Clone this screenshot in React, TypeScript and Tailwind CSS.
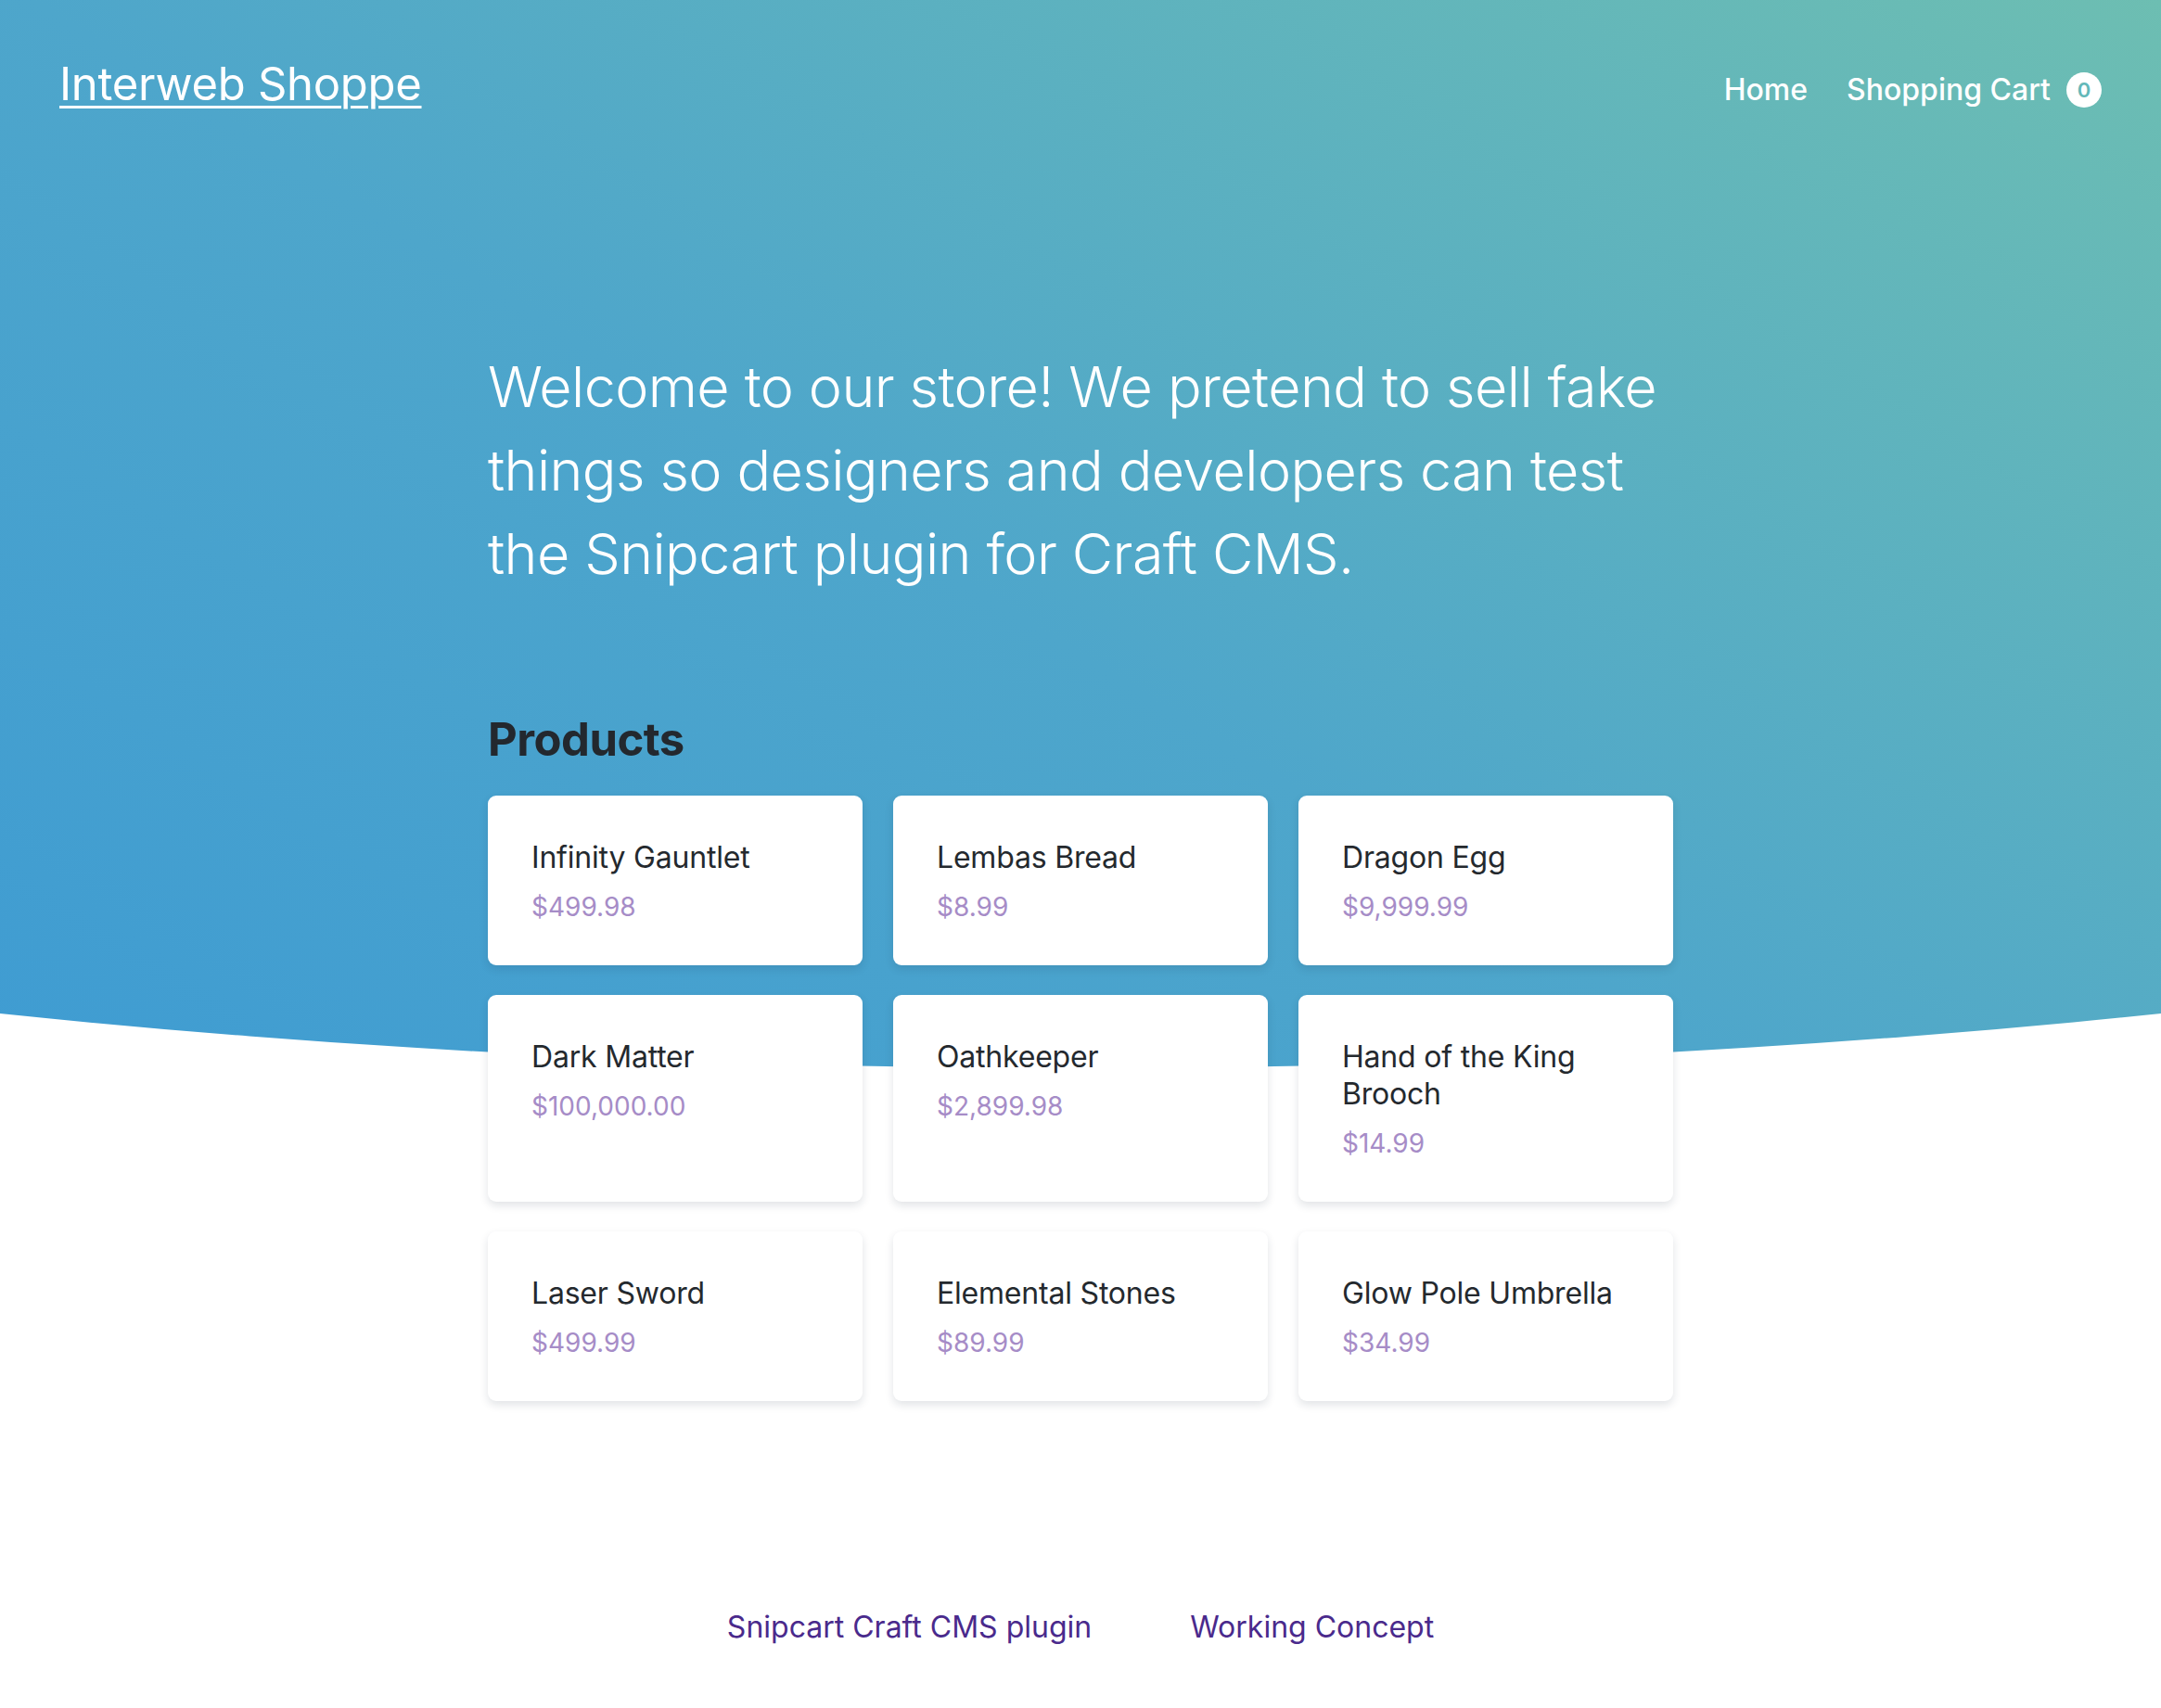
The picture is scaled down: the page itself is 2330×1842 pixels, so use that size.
import React from "react";

type Product = {
  name: string;
  price: string;
};

const PRODUCTS: Product[] = [
  { name: "Infinity Gauntlet", price: "$499.98" },
  { name: "Lembas Bread", price: "$8.99" },
  { name: "Dragon Egg", price: "$9,999.99" },
  { name: "Dark Matter", price: "$100,000.00" },
  { name: "Oathkeeper", price: "$2,899.98" },
  { name: "Hand of the King Brooch", price: "$14.99" },
  { name: "Laser Sword", price: "$499.99" },
  { name: "Elemental Stones", price: "$89.99" },
  { name: "Glow Pole Umbrella", price: "$34.99" },
];

function ProductCard({ product }: { product: Product }) {
  return (
    <a
      href="#"
      className="block rounded-[9px] bg-white pt-[47px] pb-[43px] pl-[47px] pr-[40px] shadow-[0_4px_10px_rgba(20,40,60,0.13)]"
    >
      <h3 className="text-[32px] leading-[40px] font-normal tracking-[-0.2px] text-[#24292e]">{product.name}</h3>
      <p className="mt-[13px] text-[28px] leading-[40px] text-[#a68cc7]">{product.price}</p>
    </a>
  );
}

export default function App() {
  return (
    <div className="relative min-h-screen bg-white font-['Inter','Noto_Sans',sans-serif] antialiased">
      {/* hero backdrop with the curved bottom edge */}
      <div className="absolute inset-x-0 top-0 h-[1152px] bg-[linear-gradient(32deg,#3f9cd2_0%,#4ea6cb_45%,#6dbeb2_100%)] [clip-path:ellipse(3688px_1152px_at_50%_0)]" />

      <div className="relative">
        <header className="flex h-[180px] items-start justify-between px-[64px] pt-[61px]">
          <a
            href="#"
            className="text-[49px] leading-[60px] font-normal tracking-[-0.3px] text-white underline decoration-[3px] underline-offset-[6px]"
          >
            Interweb Shoppe
          </a>
          <nav className="mt-[16px] flex items-center gap-[42px] text-[32px] leading-[40px] font-medium text-white">
            <a href="#">Home</a>
            <a href="#" className="flex items-center gap-[17px]">
              Shopping Cart
              <span className="flex h-[38px] w-[38px] items-center justify-center rounded-full bg-white text-[22px] font-semibold leading-none text-[#63b8b9]">
                0
              </span>
            </a>
          </nav>
        </header>

        <main className="mx-auto w-[1278px] pt-[192px]">
          <p className="text-[61px] leading-[90px] font-light tracking-[-0.6px] text-white">
            Welcome to our store! We pretend to sell fake things so designers and developers can test
            the Snipcart plugin for Craft CMS.
          </p>

          <h2 className="mt-[127px] text-[49px] leading-[58px] font-bold tracking-[-0.5px] text-[#23282e]">
            Products
          </h2>

          <div className="mt-[31px] grid grid-cols-3 gap-x-[33px] gap-y-[32px]">
            {PRODUCTS.map((p) => (
              <ProductCard key={p.name} product={p} />
            ))}
          </div>
        </main>

        <footer className="mt-[224px] flex justify-center gap-[106px] pb-[63px] text-[32px] leading-[40px] text-[#4a2a8c]">
          <a href="#">Snipcart Craft CMS plugin</a>
          <a href="#">Working Concept</a>
        </footer>
      </div>
    </div>
  );
}
